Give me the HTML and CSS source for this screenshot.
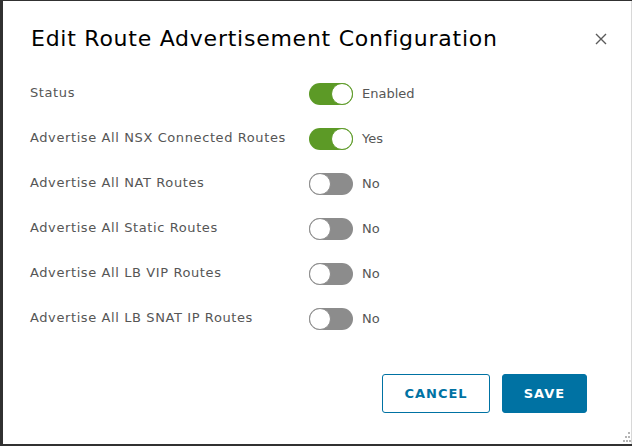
FILE: index.html
```html
<!DOCTYPE html>
<html>
<head>
<meta charset="utf-8">
<link rel="stylesheet" href="styles.css">
</head>
<body>
<div class="dialog">
  <div class="header">
    <h1 class="title">Edit Route Advertisement Configuration</h1>
    <button class="close" aria-label="Close">
      <svg width="12" height="12" viewBox="0 0 12 12"><path d="M1 1L11 11M11 1L1 11" stroke="#5b5b5b" stroke-width="1.4" fill="none"/></svg>
    </button>
  </div>
  <div class="rows">
    <div class="row"><span class="label">Status</span><span class="toggle on"><span class="knob"></span></span><span class="value">Enabled</span></div>
    <div class="row"><span class="label">Advertise All NSX Connected Routes</span><span class="toggle on"><span class="knob"></span></span><span class="value">Yes</span></div>
    <div class="row"><span class="label">Advertise All NAT Routes</span><span class="toggle"><span class="knob"></span></span><span class="value">No</span></div>
    <div class="row"><span class="label">Advertise All Static Routes</span><span class="toggle"><span class="knob"></span></span><span class="value">No</span></div>
    <div class="row"><span class="label">Advertise All LB VIP Routes</span><span class="toggle"><span class="knob"></span></span><span class="value">No</span></div>
    <div class="row"><span class="label">Advertise All LB SNAT IP Routes</span><span class="toggle"><span class="knob"></span></span><span class="value">No</span></div>
  </div>
  <div class="footer">
    <button class="btn btn-outline">CANCEL</button>
    <button class="btn btn-primary">SAVE</button>
  </div>
  <div class="grip">
    <svg width="8" height="12" viewBox="0 0 8 12"><g fill="#b5b5b5"><rect x="5" y="0" width="2" height="2"/><rect x="2" y="4" width="2" height="2"/><rect x="5" y="4" width="2" height="2"/><rect x="0" y="8" width="2" height="2"/><rect x="3" y="8" width="2" height="2"/><rect x="6" y="8" width="2" height="2"/></g></svg>
  </div>
</div>
</body>
</html>
```
FILE: styles.css
```css
html, body {
  margin: 0;
  padding: 0;
  background: #313131;
  width: 632px;
  height: 446px;
  overflow: hidden;
}
.dialog {
  position: relative;
  box-sizing: border-box;
  margin: 1px 0 0 3px;
  width: 629px;
  height: 443px;
  background: #fff;
  border-right: 1px solid #d8d8d8;
  font-family: "DejaVu Sans", sans-serif;
  color: #565656;
}
.header {
  display: flex;
  align-items: center;
  justify-content: space-between;
  padding: 23px 24px 0 28px;
  height: 30px;
}
.title {
  margin: 0;
  font-weight: 400;
  font-size: 22px;
  line-height: 30px;
  color: #000;
  letter-spacing: 0.75px;
}
.close {
  border: 0;
  background: none;
  padding: 0;
  width: 12px;
  height: 12px;
  display: flex;
}
.rows {
  margin-top: 16px;
  padding-left: 27px;
}
.row {
  display: flex;
  align-items: center;
  height: 45px;
}
.label {
  width: 279px;
  font-size: 13px;
  color: #565656;
  letter-spacing: 0.6px;
}
.value {
  font-size: 13px;
  color: #565656;
  margin-left: 9px;
  position: relative;
  top: 1px;
}
.toggle {
  position: relative;
  top: 1px;
  box-sizing: border-box;
  width: 44px;
  height: 22px;
  border-radius: 11px;
  background: #8c8c8c;
  display: flex;
  align-items: center;
}
.toggle .knob {
  box-sizing: border-box;
  width: 22px;
  height: 22px;
  border-radius: 50%;
  background: #fff;
  border: 1px solid #8c8c8c;
}
.toggle.on {
  background: #5c9a26;
  justify-content: flex-end;
}
.toggle.on .knob {
  border-color: #5c9a26;
}
.footer {
  display: flex;
  justify-content: flex-end;
  gap: 12px;
  padding: 34px 44px 0 0;
}
.btn {
  box-sizing: border-box;
  height: 39px;
  border-radius: 3px;
  font-family: "DejaVu Sans", sans-serif;
  font-weight: 700;
  font-size: 13px;
  letter-spacing: 1px;
  padding: 0;
}
.btn-outline {
  width: 108px;
  background: #fff;
  border: 1px solid #0072a3;
  color: #0072a3;
}
.btn-primary {
  width: 85px;
  background: #0072a3;
  border: 1px solid #0072a3;
  color: #fff;
}
.grip {
  position: absolute;
  right: 0;
  bottom: 0;
  display: flex;
}
```
